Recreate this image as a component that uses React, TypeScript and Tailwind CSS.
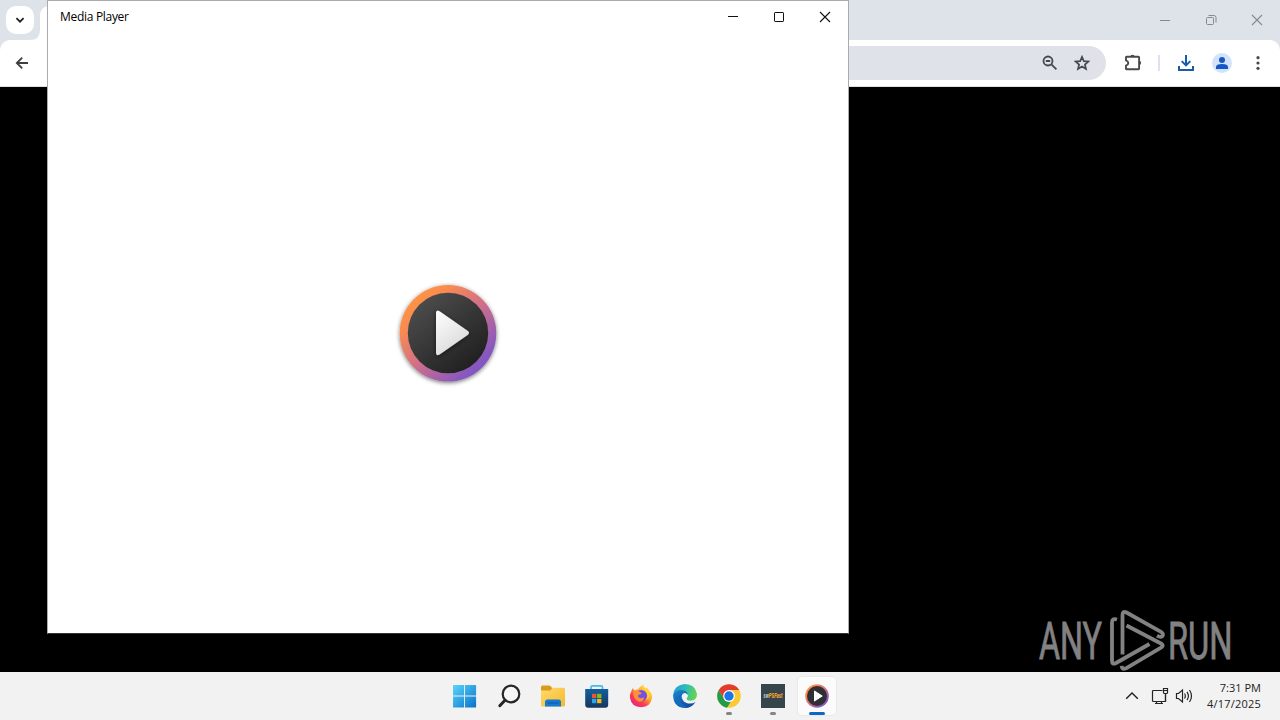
import React from "react";
import { clsx } from "clsx";

const uiFont = "font-['Open_Sans','Noto_Sans',sans-serif]";

const BrowserToolbar = () => {
  return (
    <div className="flex h-[47px] items-center justify-between rounded-t-[10px] border-b border-[#dcdfe3] bg-white">
      <svg width="44" height="46" viewBox="0 0 44 46" fill="none" stroke="#3c4043" strokeWidth="1.8">
        <path d="M28 23H17M22.2 17.6 16.8 23l5.4 5.4" />
      </svg>

      <div className="flex h-full items-center">
        <div className="flex h-[34px] w-[300px] items-center justify-end rounded-full bg-[#dfe3e9] pr-4">
          <svg width="16" height="16" viewBox="0 0 16 16" fill="none" stroke="#474a4d" strokeWidth="1.8" className="mr-4">
            <circle cx="6" cy="6" r="4.5" />
            <path d="m9.4 9.4 5 5M3.800 6h4.400" />
          </svg>
          <svg width="16" height="16" viewBox="0 0 16 16" fill="none" stroke="#474a4d" strokeWidth="1.7">
            <path d="m8 1.900 1.800 4.200 4.600.400-3.500 3 1.100 4.500L8 11.600 4 14l1.100-4.500-3.500-3 4.600-.400z" />
          </svg>
        </div>
        <svg width="20" height="20" viewBox="0 0 20 20" className="ml-4" fill="none" stroke="#474a4d" strokeWidth="1.9">
          <path d="M4 4.300q0-.500.500-.500h12q.600 0 .600.600v11.200q0 .600-.600.600h-12q-.500 0-.500-.600v-3q2.300-.800 2.300-2.600T4 7.400z" />
          <path d="M8.400 3.800a2.100 2.100 0 0 1 4.200 0zM17 7.800a2.100 2.100 0 0 1 0 4.200z" fill="#474a4d" stroke="none" />
        </svg>
        <div className="ml-4 h-4 w-0.5 bg-[#dce3f0]" />
        <svg width="20" height="20" viewBox="0 0 20 20" className="ml-4" fill="none" stroke="#175cab" strokeWidth="2">
          <path d="M10 2v10M5.700 8.100l4.300 4.300 4.300-4.300M3 13v4h14v-4" />
        </svg>
        <svg width="20" height="20" viewBox="0 0 20 20" className="ml-4">
          <circle cx="10" cy="10" r="10" fill="#d3e3fd" />
          <circle cx="10" cy="7" r="3" fill="#1557c4" />
          <path d="M4 16v-2q0-3 6-3t6 3v2z" fill="#1557c4" />
        </svg>
        <svg width="20" height="20" viewBox="0 0 20 20" className="mx-4 mr-3" fill="#474a4d">
          <circle cx="10" cy="4.700" r="1.600" />
          <circle cx="10" cy="10" r="1.600" />
          <circle cx="10" cy="15.300" r="1.600" />
        </svg>
      </div>
    </div>
  );
};

const Browser = () => {
  return (
    <div className="bg-[#dee2e9]">
      <div className="flex h-10 justify-between">
        <div className="flex">
          <div className="flex h-full w-10 items-center justify-center">
            <div className="flex h-7 w-7 items-center justify-center rounded-[10px] bg-white">
              <svg width="10" height="10" viewBox="0 0 10 10" fill="none" stroke="#202124" strokeWidth="1.8">
                <path d="m1.400 3.200 3.600 3.500 3.600-3.500" />
              </svg>
            </div>
          </div>
          {/* active tab, its foot flares out to the left */}
          <svg width="210" height="40" viewBox="0 0 210 40" className="-ml-2.5" fill="#fff">
            <path d="M0 40q10 0 10-10V16Q10 6 20 6h180v34z" />
          </svg>
        </div>
        <svg width="138" height="40" viewBox="0 0 138 40" fill="none" stroke="#858990" strokeWidth="1">
          <path d="M18 20.500h10" />
          <rect x="64.500" y="17.500" width="7" height="7" rx="1" />
          <path d="M66.500 15.500h5.500q2 0 2 2v5" />
          <path d="m110 15 10 10m0-10-10 10" strokeWidth="1.100" />
        </svg>
      </div>
      <BrowserToolbar />
    </div>
  );
};

const Watermark = () => {
  return (
    <svg
      width="200"
      height="64"
      viewBox="0 0 200 64"
      className="absolute left-[1038px] top-[608px]"
      fill="#828282"
    >
      <g fontSize="51.500" fontFamily="Roboto, sans-serif" stroke="#828282" strokeWidth="0.900">
        <text x="1" y="51.200" textLength="63" lengthAdjust="spacingAndGlyphs">
          ANY
        </text>
        <text x="130" y="51.200" textLength="64.500" lengthAdjust="spacingAndGlyphs">
          RUN
        </text>
      </g>
      <g fill="none" stroke="#828282" strokeWidth="3.800" strokeLinejoin="round">
        <path d="M79 11.500q-5-1.500-5 3V53q0 4 4 2l33.500-19" />
        <path d="M84.500 46.500V7q0-4.500 4-2.500L123 23.800q3 2 1.500 4.200-2 1.800-5.500-.300" />
        <path d="m88.500 17.500 34.500 18q3.500 2 0 4.200L88 60.300q-4 1.700-4.300-2.500" />
      </g>
    </svg>
  );
};

const MediaPlayer = () => {
  return (
    <div className="absolute left-[47px] top-0 flex h-[634px] w-[802px] flex-col border border-[#aaabad] border-b-[#333] bg-white">
      <div className="flex h-8 items-center justify-between">
        <span className={clsx(uiFont, "pl-3 text-[12px] leading-8 tracking-[-0.3px] text-black")}>
          Media Player
        </span>
        <svg width="138" height="32" viewBox="0 0 138 32" fill="none" stroke="#111" strokeWidth="1">
          <path d="M18 15.500h10" />
          <rect x="64.500" y="11.500" width="9" height="9" rx="0.600" />
          <path d="m110 11 10 10m0-10-10 10" strokeWidth="1.100" />
        </svg>
      </div>
      <div className="flex h-[600px] items-center justify-center">
        <svg width="112" height="112" viewBox="0 0 112 112">
          <defs>
            <linearGradient id="ring" x1="0.100" y1="0.100" x2="0.850" y2="0.900">
              <stop offset="0" stopColor="#ff963f" />
              <stop offset="0.200" stopColor="#f98b51" />
              <stop offset="0.550" stopColor="#cd6e8c" />
              <stop offset="0.900" stopColor="#8859bd" />
              <stop offset="1" stopColor="#7f56c4" />
            </linearGradient>
            <linearGradient id="disc" x1="0.150" y1="0.100" x2="0.800" y2="0.900">
              <stop offset="0" stopColor="#4c4c4c" />
              <stop offset="1" stopColor="#212121" />
            </linearGradient>
            <linearGradient id="play" x1="0" y1="0" x2="0.600" y2="1">
              <stop offset="0" stopColor="#fff" />
              <stop offset="1" stopColor="#d9d9d9" />
            </linearGradient>
            <filter id="shade" x="-20%" y="-20%" width="140%" height="140%">
              <feDropShadow dx="0" dy="1.200" stdDeviation="2" floodOpacity="0.550" />
            </filter>
          </defs>
          <circle cx="56" cy="56.300" r="48.300" fill="url(#ring)" filter="url(#shade)" />
          <circle cx="56" cy="56" r="40.200" fill="url(#disc)" />
          <path
            d="M44 36q0-4 3.600-1.800l28 19.500q2.800 2.100 0 4.200l-28 19.600Q44 79.500 44 75.800z"
            fill="url(#play)"
            filter="url(#shade)"
          />
        </svg>
      </div>
    </div>
  );
};

const StartIcon = () => (
  <svg width="24" height="24" viewBox="0 0 24 24">
    <defs>
      <linearGradient id="start" x1="0" y1="0" x2="1" y2="1">
        <stop offset="0" stopColor="#5bd5fb" />
        <stop offset="1" stopColor="#0872c9" />
      </linearGradient>
    </defs>
    <path
      d="M.6 1h10.500v10.500H0V1.600Q0 1 .6 1zM12 1h10.500q.6 0 .6.600v9.900H12zM0 12.500h11.100v11.100H.6q-.6 0-.6-.6zM12 12.500h11.100V23q0 .6-.6.600H12z"
      fill="url(#start)"
    />
  </svg>
);

const SearchIcon = () => (
  <svg width="24" height="24" viewBox="0 0 24 24" fill="none" stroke="#252525">
    <circle cx="14" cy="10" r="8.300" strokeWidth="2.200" fill="#f6f6f6" />
    <path d="m8 16.300-5.200 5.400" strokeWidth="3" strokeLinecap="round" />
  </svg>
);

const FolderIcon = () => (
  <svg width="26" height="24" viewBox="0 0 26 24">
    <defs>
      <linearGradient id="folder" x1="0" y1="0" x2="1" y2="1">
        <stop offset="0" stopColor="#ffdb70" />
        <stop offset="1" stopColor="#f5b82a" />
      </linearGradient>
    </defs>
    <path d="M1 3Q1 1.500 2.500 1.500h6.700q.8 0 1.400.6L12 4v4H1z" fill="#d99b18" />
    <path d="M1 6.500h8.500q.8 0 1.300-.6l1.300-1.600q.5-.5 1.200-.5h10.200q1.500 0 1.500 1.500v15.700q0 1.500-1.500 1.500h-21Q1 22.500 1 21z" fill="url(#folder)" />
    <path d="M5 22.500V18q0-2.500 2.500-2.500h11Q21 15.500 21 18v4.500z" fill="#1479d2" />
    <path d="M8 19h10" stroke="#1063b0" strokeWidth="1.300" strokeLinecap="round" />
  </svg>
);

const StoreIcon = () => (
  <svg width="24" height="24" viewBox="0 0 24 24">
    <defs>
      <linearGradient id="store" x1="0" y1="0" x2="0" y2="1">
        <stop offset="0" stopColor="#12609f" />
        <stop offset="1" stopColor="#17365f" />
      </linearGradient>
    </defs>
    <path d="M6 6V3.300q0-1.500 1.500-1.500h8.500q1.500 0 1.500 1.500V6" fill="none" stroke="#43bce9" strokeWidth="1.700" />
    <path d="M.2 5h23v15.800q0 3-3 3h-17q-3 0-3-3z" fill="url(#store)" />
    <path d="M7 9.800h4.300v4.300H7z" fill="#ef5430" />
    <path d="M12.100 9.800h4.300v4.300h-4.300z" fill="#82bb23" />
    <path d="M7 14.900h4.300v4.300H7z" fill="#28a8eb" />
    <path d="M12.100 14.900h4.300v4.300h-4.300z" fill="#fbb914" />
  </svg>
);

const FirefoxIcon = () => (
  <svg width="24" height="24" viewBox="0 0 24 24">
    <defs>
      <linearGradient id="fox" x1="0.850" y1="0.100" x2="0.200" y2="0.950">
        <stop offset="0" stopColor="#fff04d" />
        <stop offset="0.400" stopColor="#ffa02e" />
        <stop offset="0.700" stopColor="#fb3b50" />
        <stop offset="1" stopColor="#e62487" />
      </linearGradient>
    </defs>
    <path
      d="M2.200 7.500 3.700 4l1.800 2.700Q7 5.600 9 5.300 11 2.400 14.300.5q.4 2.500 2.500 4l1.200-1.200q1 2 3 4.200Q23.500 10 23 14q-1.500 9-10.900 9.300Q2.500 23 1 14q-.4-3.700 1.200-6.500z"
      fill="url(#fox)"
    />
    <circle cx="12.400" cy="11.800" r="5.700" fill="#7650df" />
    <path d="M4.500 7Q8 5.600 11 8l1.700 1.300q-.8 1.200-3.200 1.500-1.400 1.600.4 2.800 2 1.200 4.600-.3 1.100 1.700-.7 3.200-4.200 3-8-1.700Q3.400 11 4.500 7z" fill="#ff9235" />
    <path d="M13 5.200q3.500 1 4.900 4.200 1.300 4-1.600 6.500 5-1.500 4-6.500-1.500-4.400-6-6z" fill="#ffcf36" />
  </svg>
);

const EdgeIcon = () => (
  <svg width="24" height="24" viewBox="0 0 24 24">
    <defs>
      <linearGradient id="edgeTop" x1="0" y1="0.300" x2="1" y2="0.500">
        <stop offset="0" stopColor="#239cd9" />
        <stop offset="0.500" stopColor="#2dbdb7" />
        <stop offset="1" stopColor="#68d450" />
      </linearGradient>
      <linearGradient id="edgeSide" x1="0" y1="0" x2="0.700" y2="1">
        <stop offset="0" stopColor="#1787d2" />
        <stop offset="1" stopColor="#104c9b" />
      </linearGradient>
    </defs>
    <path d="M.1 12Q.6 1.200 12 .1 22 .5 23.900 9.500q.6 6.900-6.300 7.200-4.800-.1-3.600-2.700 2.300-3.800-1.500-5.600Q7 5.800.1 12z" fill="url(#edgeTop)" />
    <path d="M.1 11.500Q2.400 6 8.600 6q5.600.4 6.300 4.700-1.200-1.800-3.700-1.800-2.800 1-2.500 4 .7 5 6.300 6.500 4 .7 7.500-1.500-3.800 6-10.500 6Q.5 23.500.1 11.500z" fill="url(#edgeSide)" />
    <path d="M9.900 9.500Q4.500 14.500 9 20q3.500 3.800 7.500 3Q4 26 3.300 16.500 3.500 11 9.900 9.500z" fill="#136bbd" />
  </svg>
);

const ChromeIcon = () => (
  <svg width="24" height="24" viewBox="0 0 24 24">
    <circle cx="12" cy="12" r="11.800" fill="#fcc934" />
    <path d="M1.800 6.100A11.800 11.800 0 0 1 22.200 6.100H12L6.900 15z" fill="#e33b2e" />
    <path d="M1.800 6.100 6.900 15l5.100 3 1.700-.3-3.700 6A11.800 11.800 0 0 1 1.800 6.100z" fill="#229c4a" />
    <circle cx="12" cy="12" r="5.900" fill="#fff" />
    <circle cx="12" cy="12" r="4.700" fill="#1b74e8" />
  </svg>
);

const MpsFastIcon = () => (
  <svg width="24" height="24" viewBox="0 0 24 24">
    <rect width="24" height="24" fill="#36454c" />
    <text
      x="2.500"
      y="14"
      fontSize="6.500"
      fontWeight="900"
      fontStyle="italic"
      fontFamily="Roboto, sans-serif"
      fill="#eda331"
      textLength="19"
      lengthAdjust="spacingAndGlyphs"
    >
      <tspan fill="#b9c0c0">sw</tspan>PSFast
    </text>
  </svg>
);

const PlayerIcon = () => (
  <svg width="24" height="24" viewBox="0 0 24 24">
    <circle cx="12" cy="12" r="11.800" fill="url(#ring)" />
    <circle cx="12" cy="12" r="10" fill="#303034" />
    <path d="M9 7.200q0-1 .9-.5l7.300 4.700q.8.600 0 1.200L9.900 17.300q-.9.500-.9-.5z" fill="#fff" />
  </svg>
);

const apps = [
  { name: "Start", icon: <StartIcon /> },
  { name: "Search", icon: <SearchIcon /> },
  { name: "File Explorer", icon: <FolderIcon /> },
  { name: "Microsoft Store", icon: <StoreIcon /> },
  { name: "Firefox", icon: <FirefoxIcon /> },
  { name: "Edge", icon: <EdgeIcon /> },
  { name: "Chrome", icon: <ChromeIcon />, isRunning: true },
  { name: "PSFast", icon: <MpsFastIcon />, isRunning: true },
  { name: "Media Player", icon: <PlayerIcon />, isActive: true },
];

const Taskbar = () => {
  return (
    <div className="grid h-12 grid-cols-[443px_396px_1fr] bg-[#f2f2f2]">
      <div />
      <div className="flex">
        {apps.map((app) => (
          <button
            key={app.name}
            aria-label={app.name}
            className="flex h-12 w-11 items-center justify-center"
          >
            <span
              className={clsx(
                "relative flex h-[38px] w-[38px] items-center justify-center rounded",
                app.isActive && "bg-[#fbfbfb] shadow-[0_0_1px_1px_#e9e9e9]"
              )}
            >
              {app.icon}
              {app.isRunning && (
                <span className="absolute bottom-0 h-[3px] w-1.5 rounded-full bg-[#858585]" />
              )}
              {app.isActive && (
                <span className="absolute bottom-0 h-[3px] w-4 rounded-full bg-[#0b67ca]" />
              )}
            </span>
          </button>
        ))}
      </div>
      <div className="flex items-center justify-end pr-[19px]">
        <svg width="14" height="14" viewBox="0 0 14 14" fill="none" stroke="#1f1f1f" strokeWidth="1.400">
          <path d="m1.200 9.800 5.800-5.800 5.800 5.800" />
        </svg>
        <svg width="18" height="18" viewBox="0 0 18 18" className="ml-3" fill="none" stroke="#252525" strokeWidth="1.200">
          <path d="M11.500 3.500h-9q-1 0-1 1v9q0 1 1 1h12v-7M5.500 14.500v2m5-2v2M4 16.500h8" />
          <path d="M12.500 1.500h4v4q0 1-1 1h-2q-1 0-1-1zM14.500 6.500v8M12.500 3.500h4" />
        </svg>
        <svg width="18" height="18" viewBox="0 0 18 18" className="ml-1.5" fill="none" stroke="#252525" strokeWidth="1.200">
          <path d="M1.500 6.500h2l4-3.500v12l-4-3.500h-2zM9.500 6.500q1.700 2.500 0 5M12 4.800q2.800 4.200 0 8.400M14.500 3q4 6 0 12" />
        </svg>
        <div className={clsx(uiFont, "ml-3 flex w-[56px] flex-col items-end text-[11px] leading-4 text-[#222]")}>
          <span className="tracking-[0.020px]">7:31 PM</span>
          <span className="tracking-[0.200px]">4/17/2025</span>
        </div>
      </div>
    </div>
  );
};

export default function App() {
  return (
    <div className="relative flex h-[720px] w-[1280px] flex-col overflow-hidden bg-black">
      <Browser />
      <div className="flex-1" />
      <Taskbar />
      <Watermark />
      <MediaPlayer />
    </div>
  );
}
